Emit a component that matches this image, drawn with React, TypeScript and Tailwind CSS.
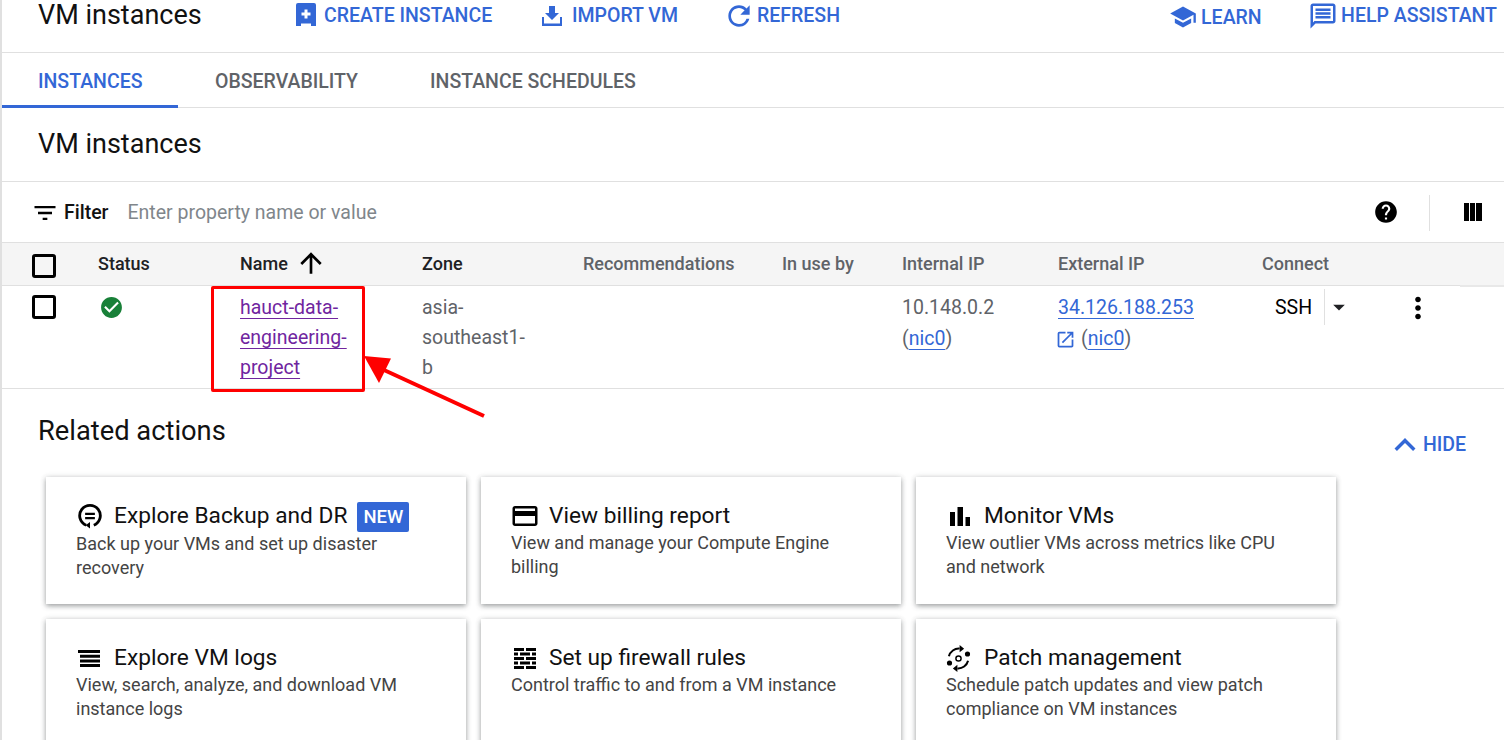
import {
  MdArrowDropDown,
  MdArrowUpward,
  MdCheckCircle,
  MdFilterList,
  MdHelp,
  MdKeyboardArrowUp,
  MdMoreVert,
  MdOpenInNew,
  MdOutlineCreditCard,
  MdOutlineMessage,
  MdRefresh,
  MdSchool,
} from 'react-icons/md';
import type { ReactNode } from 'react';

function CreateIcon() {
  return (
    <svg viewBox="0 0 20 23" className="w-[20px] h-[23px] mr-[8px] -mt-[3px]" fill="currentColor">
      <path d="M2 0h16a2 2 0 0 1 2 2v21h-5v-2.500H5V23H0V2a2 2 0 0 1 2-2zm6.500 6.500v3h-3v3h3v3h3v-3h3v-3h-3v-3h-3z" fillRule="evenodd" />
    </svg>
  );
}

function ImportIcon() {
  return (
    <svg viewBox="0 0 20 20" className="w-[20px] h-[20px] mr-[10px] -mt-[1px]" fill="currentColor">
      <path d="M7 0h6v7h4l-7 7-7-7h4zM0 11h2v6.500h16V11h2v9H0z" />
    </svg>
  );
}

function BackupIcon() {
  return (
    <svg viewBox="0 0 24 24" className="w-[26px] h-[26px] ml-[1px]" fill="none" stroke="currentColor" strokeWidth="2.600">
      <path d="M8.500 20.500A9.500 9.500 0 1 1 15.500 20.500" />
      <path d="M7.500 10h9M7.500 14h9" strokeWidth="2" />
      <path d="M12 17.500l-4 3 4 3z" fill="currentColor" stroke="none" />
    </svg>
  );
}

function BarsIcon() {
  return (
    <svg viewBox="0 0 20 19" className="w-[20px] h-[19px] ml-[4px]" fill="currentColor">
      <path d="M0 5h5v14H0zM7.500 0h5.500v19H7.500zM15.500 10h4.500v9h-4.500z" />
    </svg>
  );
}

function LogsIcon() {
  return (
    <svg viewBox="0 0 22 17" className="w-[22px] h-[17px] ml-[2px]" fill="currentColor">
      <path d="M0 0h22v3H0zM2 4.700h20v3H2zM2 9.400h20v3H2zM2 14h20v3H2z" />
    </svg>
  );
}

function FirewallIcon() {
  return (
    <svg viewBox="0 0 22 21" className="w-[22px] h-[21px] ml-[3px]" fill="currentColor">
      <path d="M0 0h10v3H0zM12 0h10v3H12zM0 4.500h4v3H0zM6 4.500h10v3H6zM18 4.500h4v3h-4zM0 9h10v3H0zM12 9h10v3H12zM0 13.500h4v3H0zM6 13.500h10v3H6zM18 13.500h4v3h-4zM0 18h10v3H0zM12 18h10v3H12z" />
    </svg>
  );
}

function PatchIcon() {
  return (
    <svg viewBox="0 0 24 24" className="w-[27px] h-[27px] -ml-[1px]" fill="none" stroke="currentColor" strokeWidth="1.800">
      <path d="M3.500 10a9 9 0 0 1 9.500-6.800" />
      <path d="M20.500 14a9 9 0 0 1-9.500 6.800" />
      <path d="M13 0v6.500l4-3.200zM11 17.500V24l-4-3.200z" fill="currentColor" stroke="none" />
      <circle cx="12" cy="12" r="2.300" strokeWidth="1.300" />
      <circle cx="20" cy="8" r="2.300" fill="currentColor" stroke="none" />
      <circle cx="4" cy="16" r="2.300" fill="currentColor" stroke="none" />
    </svg>
  );
}

function ColumnsIcon() {
  return (
    <svg viewBox="0 0 20 20" className="w-5 h-5" fill="currentColor">
      <path d="M1 1h5v18H1zM7 1h5v18H7zM13 1h6v18h-6z" />
    </svg>
  );
}

function ToolbarButton({ icon, label, className }: { icon: ReactNode; label: string; className: string }) {
  return (
    <div className={'flex items-center text-[#3367d6] text-[19.500px] font-medium ' + className}>
      {icon}
      <span>{label}</span>
    </div>
  );
}

function ActionCard({ icon, title, text, badge }: { icon: ReactNode; title: string; text: string; badge?: boolean }) {
  return (
    <div className="bg-white h-[127px] pl-[30px] pr-[40px] pt-[24px] shadow-[0_2px_5px_rgba(60,64,67,0.45),0_0_6px_rgba(60,64,67,0.12)]">
      <div className="flex items-center h-[30px]">
        <span className="w-[38px] shrink-0 text-black">{icon}</span>
        <span className="text-[22.700px] leading-[30px] font-normal text-[#111]">{title}</span>
        {badge && (
          <span className="ml-[10px] mt-[2px] bg-[#3367d6] text-white text-[18.500px] font-medium leading-[30px] h-[30px] px-[6px] rounded-[2px]">
            NEW
          </span>
        )}
      </div>
      <p className={'text-[#444] text-[18px] leading-[24px] ' + (badge ? 'mt-[1px]' : 'mt-0')}>{text}</p>
    </div>
  );
}

const tableCols = 'grid grid-cols-[96px_142px_182px_161px_199px_120px_156px_204px_1fr]';
const linkText = 'text-[#3367d6] underline underline-offset-[4px] decoration-1';

export default function App() {
  return (
    <div className="relative w-[1504px] h-[740px] overflow-hidden bg-white font-['Roboto',sans-serif] text-[19.500px] text-[#3c4043]">
      <div className="border-l-2 border-[#e0e0e0] h-full">
        {/* top toolbar */}
        <div className="flex h-[53px] border-b border-[#e0e0e0]">
          <h1 className="ml-[36px] w-[258px] text-[27px] leading-[30px] text-[#111]">VM instances</h1>
          <ToolbarButton icon={<CreateIcon />} label="CREATE INSTANCE" className="h-[32px] w-[246px]" />
          <ToolbarButton icon={<ImportIcon />} label="IMPORT VM" className="h-[32px] w-[181px]" />
          <ToolbarButton icon={<MdRefresh className="w-[32px] h-[32px] mr-[2px] -mt-[1px]" />} label="REFRESH" className="h-[32px]" />
          <div className="ml-auto flex">
            <ToolbarButton icon={<MdSchool className="w-[28px] h-[28px] mr-[4px] -mt-[3px]" />} label="LEARN" className="h-[36px] w-[139px]" />
            <ToolbarButton icon={<MdOutlineMessage className="w-[30px] h-[30px] mr-[3px] -mt-[1px]" />} label="HELP ASSISTANT" className="h-[32px] pr-[7px]" />
          </div>
        </div>

        {/* tabs */}
        <div className="flex h-[55px] border-b border-[#e0e0e0] font-medium text-[#5f6368]">
          <div className="w-[176px] pl-[36px] pt-[14px] border-b-[3px] border-[#3367d6] h-[55px] text-[#3367d6]">INSTANCES</div>
          <div className="ml-[37px] pt-[14px]">OBSERVABILITY</div>
          <div className="ml-[72px] pt-[14px]">INSTANCE SCHEDULES</div>
        </div>

        <div className="h-[74px] border-b border-[#e0e0e0] pl-[36px] pt-[20px]">
          <h2 className="text-[27px] leading-[32px] text-[#111]">VM instances</h2>
        </div>

        {/* filter */}
        <div className="flex items-center h-[60px] pl-[29px] pr-[21px] pt-[1px]">
          <MdFilterList className="w-[28px] h-[28px] text-black" />
          <span className="ml-[5px] font-medium text-[#111]">Filter</span>
          <span className="ml-[19px] text-[#80868b]">Enter property name or value</span>
          <MdHelp className="ml-auto -mt-[2px] w-[26px] h-[26px] text-black" />
          <div className="ml-[30px] w-px h-[36px] bg-[#e0e0e0]" />
          <div className="ml-[33px] -mt-[2px] text-black"><ColumnsIcon /></div>
        </div>

        {/* table */}
        <div className={tableCols + ' h-[44px] items-center bg-[#f5f5f5] border-y border-[#e0e0e0] pb-[2px] text-[18px] font-medium text-[#5f6368]'}>
          <div className="pl-[30px] pt-[5px]"><span className="block w-[24px] h-[24px] border-[3px] border-black rounded-[3px]" /></div>
          <div className="text-[#202124]">Status</div>
          <div className="flex items-center gap-[7px] text-[#202124]">Name <MdArrowUpward className="w-[32px] h-[32px] text-black" /></div>
          <div className="text-[#202124]">Zone</div>
          <div>Recommendations</div>
          <div>In use by</div>
          <div>Internal IP</div>
          <div>External IP</div>
          <div>Connect</div>
        </div>
        <div className={tableCols + ' h-[103px] border-b border-[#e0e0e0] leading-[30px] pt-[7px]'}>
          <div className="pl-[30px] pt-[2px]"><span className="block w-[24px] h-[24px] border-[3px] border-black rounded-[3px]" /></div>
          <div><MdCheckCircle className="w-[25px] h-[25px] mt-[2px] ml-[1px] text-[#188038]" /></div>
          <div className="text-[#70259f] underline underline-offset-[4px] decoration-1">
            hauct-data-<br />engineering-<br />project
          </div>
          <div className="text-[#5f6368]">asia-<br />southeast1-<br />b</div>
          <div />
          <div />
          <div className="text-[#5f6368]">
            10.148.0.2
            <div className="mt-[1px]">(<span className={linkText}>nic0</span>)</div>
          </div>
          <div className="text-[#5f6368]">
            <span className={linkText}>34.126.188.253</span>
            <div className="flex items-center mt-[1px]">
              <MdOpenInNew className="w-[21px] h-[21px] -ml-[3px] text-[#3367d6] mr-[5px]" />(<span className={linkText}>nic0</span>)
            </div>
          </div>
          <div className="flex items-start text-black">
            <span className="ml-[13px] w-[49px]">SSH</span>
            <span className="border-l border-[#e0e0e0] h-[36px] -mt-[4px] flex items-center"><MdArrowDropDown className="w-[28px] h-[28px] text-[#202124]" /></span>
            <MdMoreVert className="ml-[48px] -mt-[2px] w-[34px] h-[34px] text-black" />
          </div>
        </div>

        {/* related actions */}
        <div className="flex justify-between pl-[36px] pr-[38px] pt-[24px] h-[88px]">
          <h2 className="text-[27.300px] leading-[36px] text-[#111]">Related actions</h2>
          <div className="flex items-center h-[30px] mt-[17px] text-[#3367d6] font-medium">
            <MdKeyboardArrowUp className="w-[42px] h-[42px] -mr-[3px]" /> HIDE
          </div>
        </div>
        <div className="grid grid-cols-[420px_420px_420px] gap-[15px] pl-[44px]">
          <ActionCard icon={<BackupIcon />} title="Explore Backup and DR" badge text="Back up your VMs and set up disaster recovery" />
          <ActionCard icon={<MdOutlineCreditCard className="w-[30px] h-[30px] -ml-[1px]" />} title="View billing report" text="View and manage your Compute Engine billing" />
          <ActionCard icon={<BarsIcon />} title="Monitor VMs" text="View outlier VMs across metrics like CPU and network" />
          <ActionCard icon={<LogsIcon />} title="Explore VM logs" text="View, search, analyze, and download VM instance logs" />
          <ActionCard icon={<FirewallIcon />} title="Set up firewall rules" text="Control traffic to and from a VM instance" />
          <ActionCard icon={<PatchIcon />} title="Patch management" text="Schedule patch updates and view patch compliance on VM instances" />
        </div>
      </div>

      {/* thicker rule at the end of the header */}
      <div className="absolute left-[1460px] top-[285px] w-[44px] h-[2px] bg-[#e8e8e8]" />

      {/* screenshot annotation */}
      <div className="absolute left-[211px] top-[286px] w-[154px] h-[106px] border-[3px] border-[#ff0000] rounded-[2px]" />
      <svg className="absolute left-[355px] top-[350px]" width="140" height="75" viewBox="0 0 140 75">
        <path d="M129 66L29 20" stroke="#ff0000" strokeWidth="4" />
        <path d="M9 6L36 8.500L24 33z" fill="#ff0000" />
      </svg>
    </div>
  );
}
